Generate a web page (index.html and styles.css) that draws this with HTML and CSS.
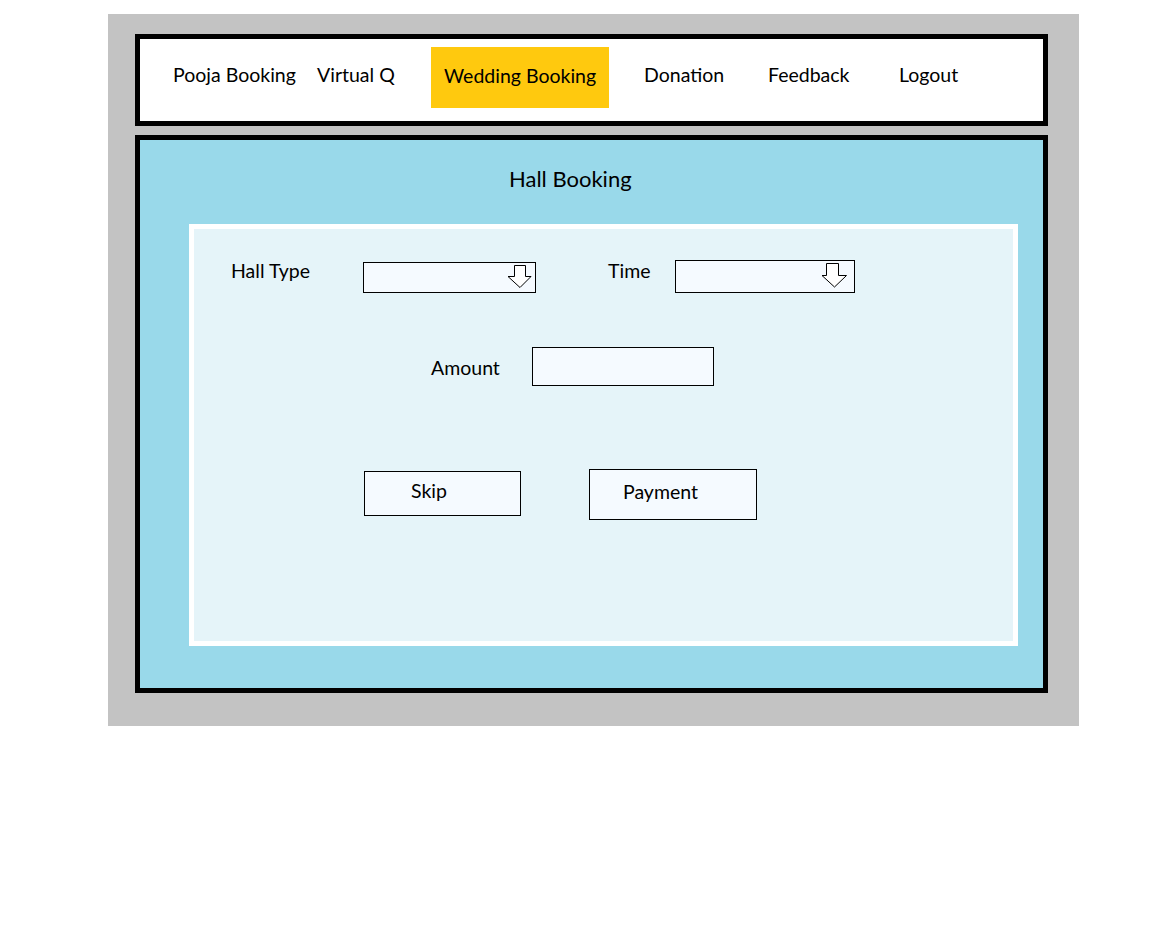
FILE: index.html
```html
<!DOCTYPE html>
<html lang="en">
<head>
<meta charset="utf-8">
<title>Hall Booking</title>
<link rel="stylesheet" href="styles.css">
</head>
<body>
<div class="frame">
  <nav class="nav">
    <a class="nav-item w-pooja">Pooja Booking</a>
    <a class="nav-item w-virtual">Virtual Q</a>
    <a class="nav-item nav-active">Wedding Booking</a>
    <a class="nav-item w-donation">Donation</a>
    <a class="nav-item w-feedback">Feedback</a>
    <a class="nav-item w-logout">Logout</a>
  </nav>
  <main class="main">
    <h1 class="title">Hall Booking</h1>
    <section class="panel">
      <div class="row row-1">
        <label class="label lbl-hall">Hall Type</label>
        <div class="select sel-hall">
          <svg class="arrow" width="25" height="24" viewBox="0 0 25 24"><path d="M7.5 0.5 H18.5 V11.5 H24 L13 22.5 L1 11.5 H7.5 Z" fill="#fff" stroke="#000" stroke-width="1"/></svg>
        </div>
        <label class="label lbl-time">Time</label>
        <div class="select sel-time">
          <svg class="arrow" width="27" height="25" viewBox="0 0 27 25"><path d="M5.5 0.5 H17.5 V12.5 H25.5 L13.5 24 L1 12.5 H5.5 Z" fill="#fff" stroke="#000" stroke-width="1"/></svg>
        </div>
      </div>
      <div class="row row-2">
        <label class="label lbl-amount">Amount</label>
        <div class="input"></div>
      </div>
      <div class="row row-3">
        <button class="btn btn-skip">Skip</button>
        <button class="btn btn-pay">Payment</button>
      </div>
    </section>
  </main>
</div>
</body>
</html>
```
FILE: styles.css
```css
* { box-sizing: border-box; }
body {
  margin: 0;
  background: #ffffff;
  font-family: Lato, "Open Sans", sans-serif;
  color: #000;
}
.frame {
  margin: 14px 0 0 108px;
  width: 971px;
  height: 712px;
  background: #c3c3c3;
  padding: 20px 31px 33px 27px;
  display: flex;
  flex-direction: column;
  gap: 9px;
}
.nav {
  height: 92px;
  border: 5px solid #000;
  background: #fff;
  display: flex;
  align-items: flex-start;
  padding: 8px 0 0 33px;
}
.nav-item {
  font-size: 19.5px;
  height: 61px;
  line-height: 56px;
  white-space: nowrap;
  color: #000;
}
.w-pooja { width: 144px; }
.w-virtual { width: 114px; }
.nav-active {
  width: 178px;
  background: #ffc90e;
  padding-left: 13px;
  line-height: 58px;
  margin-right: 35px;
}
.w-donation { width: 124px; }
.w-feedback { width: 131px; }
.w-logout { width: 80px; }

.main {
  height: 558px;
  border: 5px solid #000;
  background: #99d9ea;
  padding: 25px 0 0 0;
}
.title {
  margin: 0 0 31px 369px;
  font-size: 22px;
  font-weight: normal;
  line-height: 28px;
  height: 28px;
}
.panel {
  margin-left: 49px;
  width: 829px;
  height: 422px;
  border: 5px solid #fff;
  background: #e5f4f9;
  padding-top: 31px;
}
.row {
  display: flex;
  align-items: flex-start;
}
.label {
  font-size: 19.5px;
  line-height: 22px;
  height: 24px;
  white-space: nowrap;
}
.lbl-hall { margin-left: 37px; width: 132px; }
.lbl-time { margin-left: 72px; width: 67px; }
.select {
  position: relative;
  border: 1px solid #000;
  background: #f5faff;
}
.sel-hall { width: 173px; height: 31px; margin-top: 2px; }
.sel-time { width: 180px; height: 33px; }
.arrow { position: absolute; display: block; }
.sel-hall .arrow { right: 3px; top: 2px; }
.sel-time .arrow { right: 6px; top: 2px; }

.row-2 { margin-top: 54px; }
.lbl-amount { margin-left: 237px; width: 101px; margin-top: 10px; }
.input {
  width: 182px;
  height: 39px;
  border: 1px solid #000;
  background: #f5faff;
}

.row-3 { margin-top: 83px; }
.btn {
  font-family: inherit;
  font-size: 19.5px;
  color: #000;
  border: 1px solid #000;
  background: #f5faff;
  text-align: left;
  padding: 0;
  line-height: 24px;
}
.btn-skip {
  margin: 2px 0 0 170px;
  width: 157px;
  height: 45px;
  padding: 0 0 6px 46px;
}
.btn-pay {
  margin-left: 68px;
  width: 168px;
  height: 51px;
  padding: 0 0 6px 33px;
}
```
